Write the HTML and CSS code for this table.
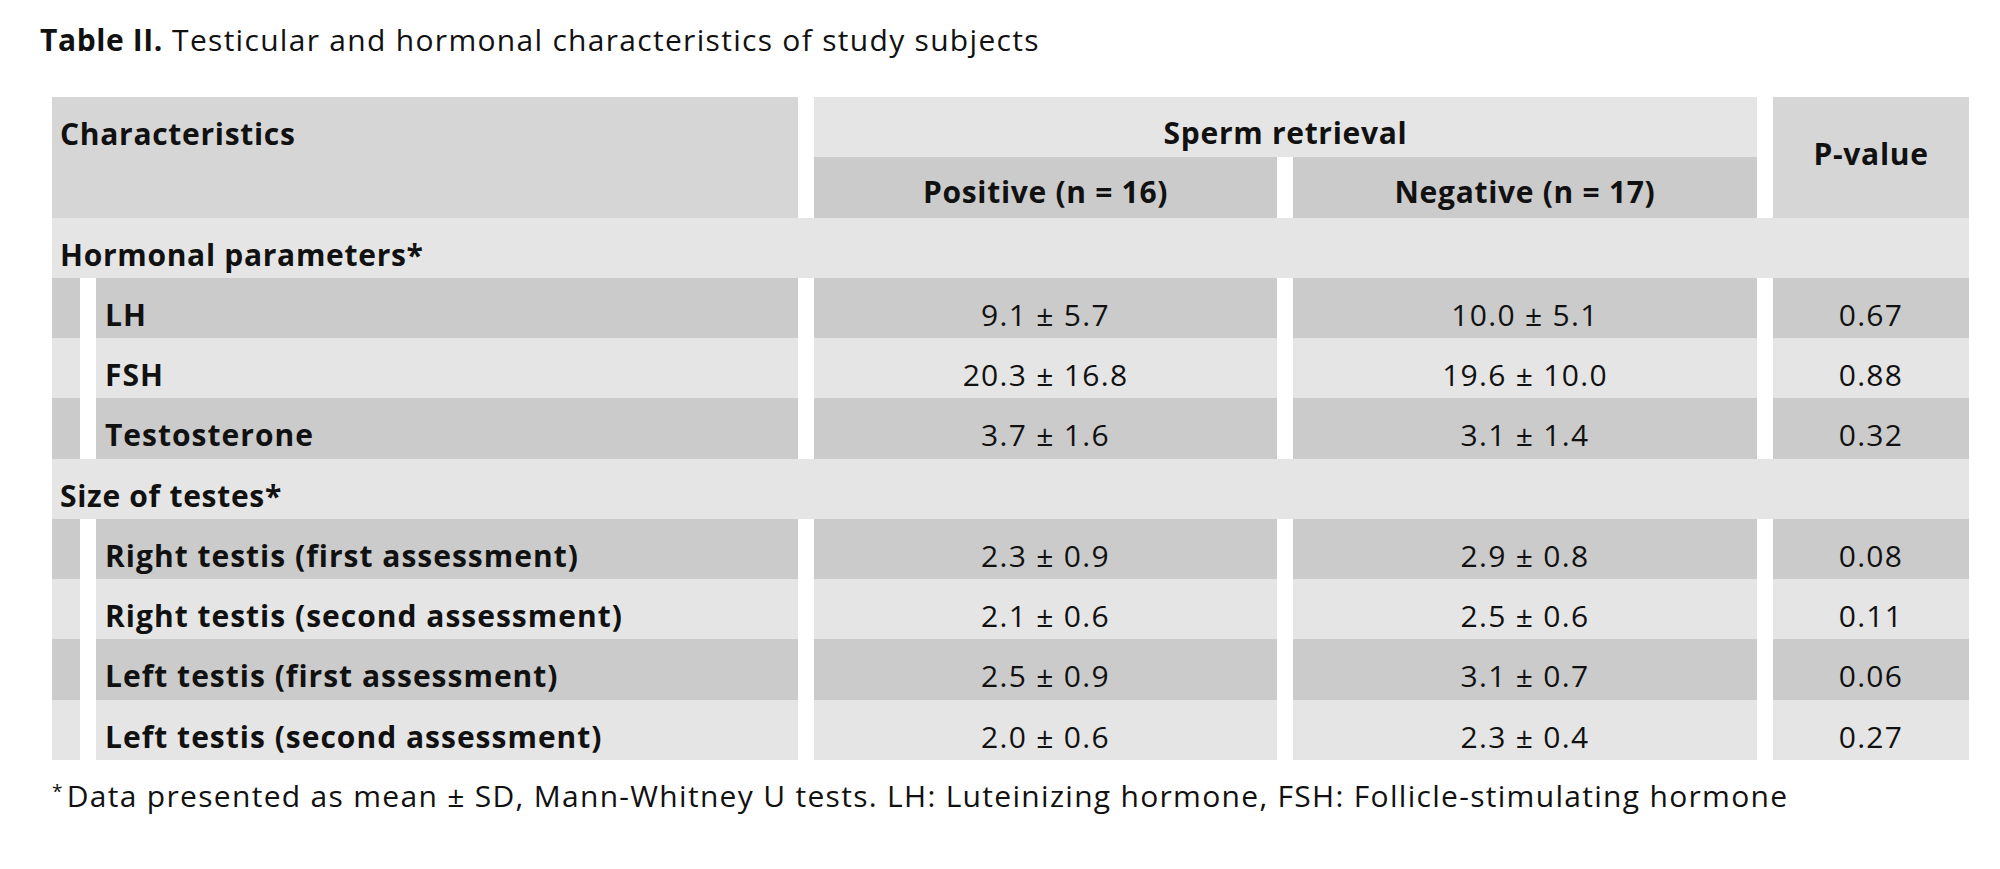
FILE: index.html
```html
<!DOCTYPE html>
<html lang="en">
<head>
<meta charset="utf-8">
<title>Table II</title>
<link rel="stylesheet" href="styles.css">
</head>
<body>
<div class="page">
  <p class="caption"><b>Table II.</b> Testicular and hormonal characteristics of study subjects</p>
  <div class="tbl">
    <div class="c hdr-char">Characteristics</div>
    <div class="c hdr-sperm">Sperm retrieval</div>
    <div class="c hdr-p">P-value</div>
    <div class="c hdr-sub">Positive (n = 16)</div>
    <div class="c hdr-sub">Negative (n = 17)</div>

    <div class="c section">Hormonal parameters*</div>

    <div class="c stub dark"></div><div class="c lbl dark">LH</div><div class="c num dark">9.1 ± 5.7</div><div class="c num dark">10.0 ± 5.1</div><div class="c num dark">0.67</div>
    <div class="c stub light"></div><div class="c lbl light">FSH</div><div class="c num light">20.3 ± 16.8</div><div class="c num light">19.6 ± 10.0</div><div class="c num light">0.88</div>
    <div class="c stub dark"></div><div class="c lbl dark">Testosterone</div><div class="c num dark">3.7 ± 1.6</div><div class="c num dark">3.1 ± 1.4</div><div class="c num dark">0.32</div>

    <div class="c section">Size of testes*</div>

    <div class="c stub dark"></div><div class="c lbl dark">Right testis (first assessment)</div><div class="c num dark">2.3 ± 0.9</div><div class="c num dark">2.9 ± 0.8</div><div class="c num dark">0.08</div>
    <div class="c stub light"></div><div class="c lbl light">Right testis (second assessment)</div><div class="c num light">2.1 ± 0.6</div><div class="c num light">2.5 ± 0.6</div><div class="c num light">0.11</div>
    <div class="c stub dark"></div><div class="c lbl dark">Left testis (first assessment)</div><div class="c num dark">2.5 ± 0.9</div><div class="c num dark">3.1 ± 0.7</div><div class="c num dark">0.06</div>
    <div class="c stub light"></div><div class="c lbl light">Left testis (second assessment)</div><div class="c num light">2.0 ± 0.6</div><div class="c num light">2.3 ± 0.4</div><div class="c num light">0.27</div>
  </div>
  <p class="note"><span class="ast">*</span>Data presented as mean ± SD, Mann-Whitney U tests. LH: Luteinizing hormone, FSH: Follicle-stimulating hormone</p>
</div>
</body>
</html>
```
FILE: styles.css
```css
html, body {
  margin: 0;
  padding: 0;
  background: #ffffff;
}

body {
  font-family: "Open Sans", "Liberation Sans", sans-serif;
  color: #111111;
  font-size: 30px;
  letter-spacing: 1.3px;
}

.page {
  padding: 18px 0 0 40px;
}

.caption {
  margin: 0;
  line-height: 44px;
}

.caption b {
  font-weight: 700;
  letter-spacing: 0.6px;
}

.tbl {
  margin: 35px 0 0 12px;
  display: grid;
  grid-template-columns: 28px 702px 463px 464px 196px;
  grid-auto-rows: 60.25px;
  column-gap: 16px;
  width: 1917px;
}

.c {
  box-sizing: border-box;
  line-height: 44px;
  padding-top: 15px;
  white-space: nowrap;
  font-weight: 700;
  letter-spacing: 0.7px;
}

.hdr-char {
  grid-column: 1 / 3;
  grid-row: 1 / 3;
  background: #d6d6d6;
  padding-left: 8px;
}

.hdr-sperm {
  grid-column: 3 / 5;
  grid-row: 1;
  background: #e5e5e5;
  text-align: center;
  padding-top: 14px;
}

.hdr-p {
  grid-column: 5;
  grid-row: 1 / 3;
  background: #d6d6d6;
  text-align: center;
  padding-top: 35px;
}

.hdr-sub {
  grid-row: 2;
  background: #cbcbcb;
  text-align: center;
  padding-top: 13px;
}

.section {
  grid-column: 1 / -1;
  background: #e5e5e5;
  padding-left: 8px;
}

.lbl {
  padding-left: 9px;
  letter-spacing: 1px;
}

.num {
  font-weight: 400;
  text-align: center;
  letter-spacing: 1.3px;
}

.dark {
  background: #cbcbcb;
}

.light {
  background: #e5e5e5;
}

.note {
  margin: 9px 0 0 12px;
  line-height: 44px;
}

.ast {
  font-size: 19px;
  vertical-align: 9px;
  margin-right: 3px;
}
```
